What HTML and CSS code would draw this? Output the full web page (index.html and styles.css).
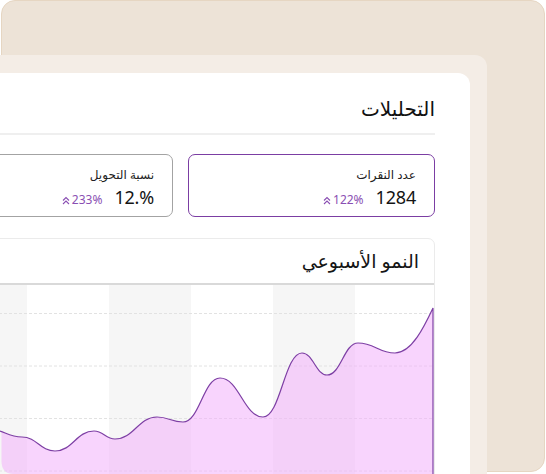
FILE: index.html
```html
<!DOCTYPE html>
<html lang="ar" dir="rtl">
<head>
<meta charset="utf-8">
<title>التحليلات</title>
<link rel="stylesheet" href="styles.css">
</head>
<body>
<div class="frame">
  <div class="sheet">
    <section class="card">
      <h1 class="title">التحليلات</h1>
      <div class="metrics">
        <div class="metric metric--active">
          <div class="metric-label">عدد النقرات</div>
          <div class="metric-row">
            <span class="metric-value">1284</span>
            <span class="metric-change"><span class="num">122%</span><svg class="chev" viewBox="0 0 8 9" width="8" height="9"><path d="M1 4.5 L4 1.5 L7 4.5 M1 8 L4 5 L7 8"/></svg></span>
          </div>
        </div>
        <div class="metric">
          <div class="metric-label">نسبة التحويل</div>
          <div class="metric-row">
            <span class="metric-value">12.%</span>
            <span class="metric-change"><span class="num">233%</span><svg class="chev" viewBox="0 0 8 9" width="8" height="9"><path d="M1 4.5 L4 1.5 L7 4.5 M1 8 L4 5 L7 8"/></svg></span>
          </div>
        </div>
      </div>
      <div class="chart-card">
        <div class="chart-head">النمو الأسبوعي</div>
        <svg class="chart" viewBox="-166 285 600 200" width="600" height="200" preserveAspectRatio="none">
          <g class="cols">
            <rect x="-219" y="285" width="82" height="200"/>
            <rect x="-55" y="285" width="82" height="200"/>
            <rect x="109" y="285" width="82" height="200"/>
            <rect x="273" y="285" width="82" height="200"/>
          </g>
          <g class="grid">
            <line x1="-166" y1="313.5" x2="433" y2="313.5"/>
            <line x1="-166" y1="366" x2="433" y2="366"/>
            <line x1="-166" y1="418.5" x2="433" y2="418.5"/>
            <line x1="-166" y1="471" x2="433" y2="471"/>
          </g>
          <path class="area" d="M1.5 431.3 C 8 434, 12 437, 22 437 C 37 437, 40 451, 55 451 C 72.5 451, 76.5 431, 94 431 C 103.5 431, 105.5 439, 115 439 C 134 439, 138 417, 157 417 C 168.7 417, 171.3 422, 183 422 C 199.6 422, 203.4 378, 220 378 C 239 378, 244 417, 263 417 C 280.5 417, 284.5 353, 302 353 C 313 353, 316 375, 327 375 C 341 375, 344 343, 358 343 C 374.6 343, 378.4 353, 395 353 C 412 353, 425 325, 433 308 L 433 474 L 14 474 Q 1.5 474 1.5 461 Z"/>
          <path class="line" d="M0 431 C 8 434, 12 437, 22 437 C 37 437, 40 451, 55 451 C 72.5 451, 76.5 431, 94 431 C 103.5 431, 105.5 439, 115 439 C 134 439, 138 417, 157 417 C 168.7 417, 171.3 422, 183 422 C 199.6 422, 203.4 378, 220 378 C 239 378, 244 417, 263 417 C 280.5 417, 284.5 353, 302 353 C 313 353, 316 375, 327 375 C 341 375, 344 343, 358 343 C 374.6 343, 378.4 353, 395 353 C 412 353, 425 325, 433 308 L 433 485"/>
        </svg>
      </div>
    </section>
  </div>
</div>
</body>
</html>
```
FILE: styles.css
```css
html, body {
  margin: 0;
  padding: 0;
}

body {
  width: 546px;
  height: 474px;
  overflow: hidden;
  background: #ffffff;
  direction: rtl;
  font-family: "Noto Sans", "DejaVu Sans", sans-serif;
  color: #151515;
}

.frame {
  box-sizing: border-box;
  width: 544px;
  height: 472px;
  margin-right: 1px;
  padding: 54px 57px 0 0;
  background: #ede3d7;
  border: 1px solid #e6d6c2;
  border-radius: 14px;
}

.sheet {
  box-sizing: border-box;
  width: 800px;
  height: 470px;
  padding: 18px 17px 0 0;
  background: #f4ede6;
  border-radius: 12px;
}

.card {
  box-sizing: border-box;
  height: 460px;
  padding: 22px 35px 0 0;
  background: #ffffff;
  border-radius: 12px;
}

.title {
  margin: 0;
  padding-bottom: 10px;
  font-size: 20px;
  line-height: 28px;
  font-weight: 500;
  color: #111111;
  border-bottom: 2px solid #efefef;
}

.metrics {
  display: flex;
  gap: 15px;
  margin-top: 19px;
}

.metric {
  box-sizing: border-box;
  flex: 0 0 247px;
  height: 63px;
  padding: 11px 18px 0 0;
  border: 1px solid #a3a3a3;
  border-radius: 7px;
}

.metric--active {
  border-color: #7b3ea3;
}

.metric-label {
  font-size: 12px;
  line-height: 18px;
  color: #222222;
}

.metric-row {
  display: flex;
  align-items: baseline;
  gap: 12px;
  margin-top: 1px;
}

.metric-value {
  direction: ltr;
  unicode-bidi: isolate;
  font-size: 18px;
  line-height: 24px;
  letter-spacing: -0.2px;
  color: #141414;
}

.metric-change {
  display: inline-flex;
  align-items: center;
  gap: 2px;
  font-size: 12px;
  line-height: 14px;
  color: #8a4fb3;
}

.num {
  direction: ltr;
  unicode-bidi: isolate;
}

.chev {
  display: block;
}

.chev path {
  fill: none;
  stroke: #8a4fb3;
  stroke-width: 1.1;
}

.chart-card {
  margin-top: 21px;
  border: 1px solid #ebebeb;
  border-radius: 7px;
  height: 300px;
  overflow: hidden;
}

.chart-head {
  padding: 10px 15px 10px 0;
  font-size: 19px;
  line-height: 24px;
  color: #151515;
  border-bottom: 2px solid #d9d9d9;
}

.chart {
  display: block;
  width: 600px;
  height: 200px;
}

.cols rect {
  fill: #f6f6f6;
}

.grid line {
  stroke: #e2e2e2;
  stroke-width: 1;
  stroke-dasharray: 3 2;
}

.area {
  fill: #f2b0fb;
  fill-opacity: 0.55;
}

.line {
  fill: none;
  stroke: #7d3fa4;
  stroke-width: 1.2;
}
```
